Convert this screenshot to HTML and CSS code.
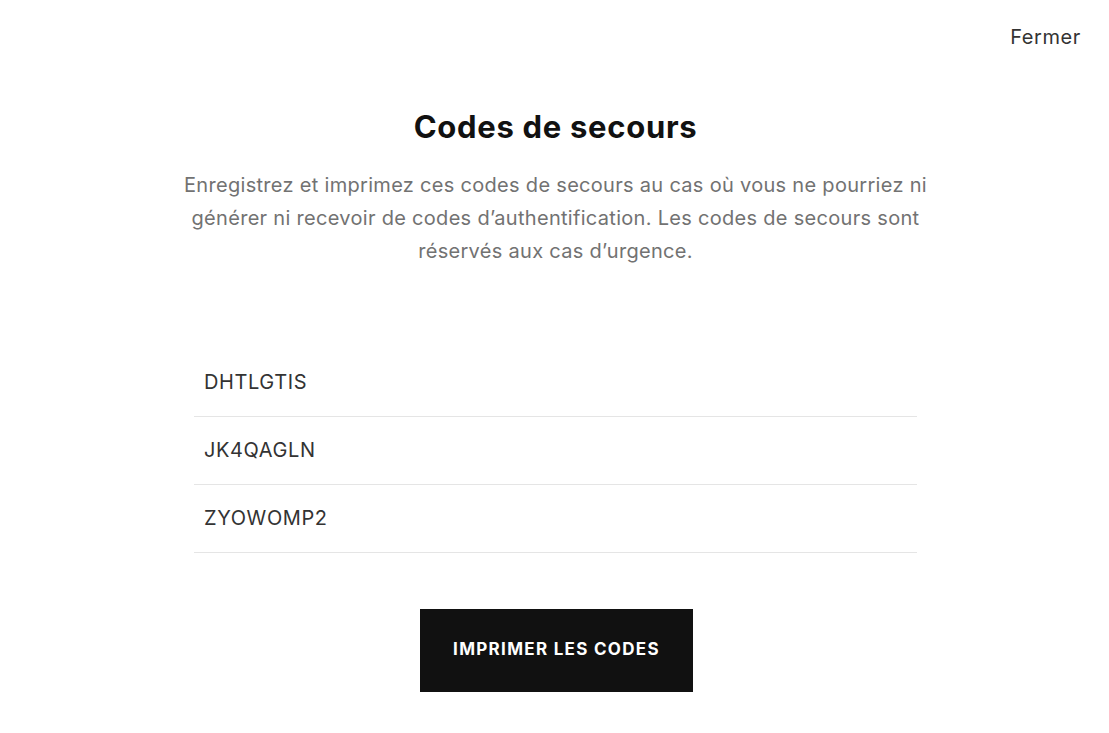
FILE: index.html
```html
<!DOCTYPE html>
<html lang="fr">
<head>
<meta charset="utf-8">
<title>Codes de secours</title>
<link rel="stylesheet" href="styles.css">
</head>
<body>
<div class="page">
  <header class="topbar">
    <a class="close" href="#">Fermer</a>
  </header>
  <main class="content">
    <h1 class="title">Codes de secours</h1>
    <p class="desc">Enregistrez et imprimez ces codes de secours au cas où vous ne pourriez ni générer ni recevoir de codes d’authentification. Les codes de secours sont réservés aux cas d’urgence.</p>
    <ul class="codes">
      <li class="code">DHTLGTIS</li>
      <li class="code">JK4QAGLN</li>
      <li class="code">ZYOWOMP2</li>
    </ul>
    <button class="print" type="button">IMPRIMER LES CODES</button>
  </main>
</div>
</body>
</html>
```
FILE: styles.css
```css
* { box-sizing: border-box; }
html, body {
  margin: 0;
  padding: 0;
  background: #fff;
}
body {
  font-family: Inter, "Noto Sans", "Liberation Sans", sans-serif;
  color: #111;
}
.page {
  width: 1109px;
  min-height: 733px;
  display: flex;
  flex-direction: column;
}
.topbar {
  display: flex;
  justify-content: flex-end;
  padding: 24px 28px 0 0;
  height: 56px;
}
.close {
  font-size: 20px;
  line-height: 26px;
  color: #333;
  text-decoration: none;
  letter-spacing: 0.6px;
}
.content {
  display: flex;
  flex-direction: column;
  align-items: center;
  padding-left: 2px;
}
.title {
  margin: 51px 0 0;
  font-size: 31px;
  line-height: 40px;
  font-weight: 700;
  letter-spacing: 0.7px;
  color: #111;
}
.desc {
  margin: 22px 0 0;
  width: 790px;
  text-align: center;
  font-size: 20px;
  line-height: 33px;
  color: #727272;
  letter-spacing: 0.3px;
}
.codes {
  list-style: none;
  margin: 81px 0 0;
  padding: 0;
  width: 723px;
}
.code {
  height: 68px;
  display: flex;
  align-items: center;
  padding: 0 10px 2px;
  border-bottom: 1px solid #e5e5e5;
  font-size: 20px;
  color: #333;
  letter-spacing: 0.6px;
}
.print {
  margin-top: 56px;
  margin-left: 2px;
  width: 273px;
  height: 83px;
  padding: 0 0 4px;
  background: #111;
  border: none;
  color: #fff;
  font-family: inherit;
  font-size: 17px;
  font-weight: 700;
  letter-spacing: 1.3px;
  cursor: pointer;
}
```
